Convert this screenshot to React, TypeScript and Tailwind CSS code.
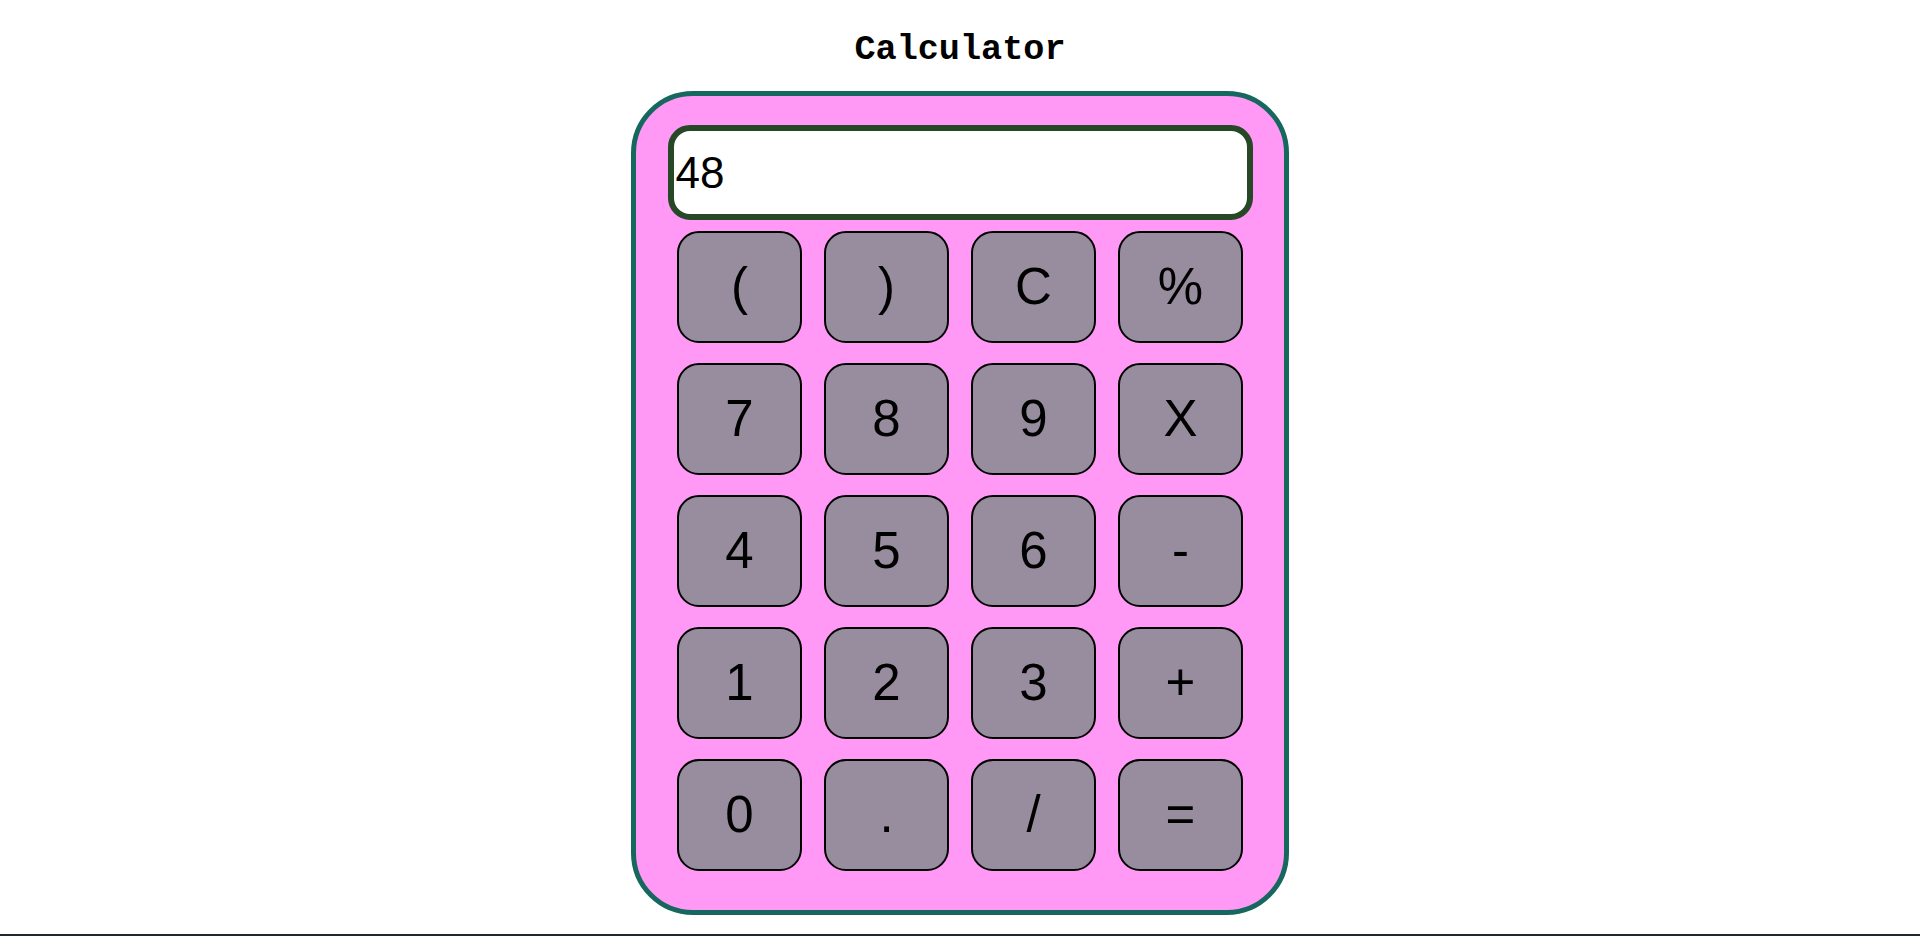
const keys: string[] = [
    "(", ")", "C", "%",
    "7", "8", "9", "X",
    "4", "5", "6", "-",
    "1", "2", "3", "+",
    "0", ".", "/", "=",
]

const App = () => {

    const buttons: JSX.Element[] = keys.map((key) => {
        return (
            <button key={key} type="button" className="w-[125px] h-[112px] flex items-center justify-center rounded-[22px] border-2 border-black bg-[#978d9e] text-[51px] text-black font-['Liberation_Sans',Arial,sans-serif]">
                {key}
            </button>
        )
    })

    return (
        <div className="h-screen w-full bg-white border-b-2 border-[#1e2830] flex flex-col items-center">
            <h1 className="pt-[30px] mb-[21px] text-[35.2px] leading-[40px] font-bold text-black font-['Liberation_Mono','Courier_New',monospace]">Calculator</h1>
            <div className="w-[658px] h-[824px] flex flex-col items-center border-[5px] border-[#16685e] rounded-[62px] bg-[#ff99f5] pt-[29px]">
                <input type="text" readOnly value="48" className="w-[585px] h-[95px] rounded-[22px] border-[6px] border-[#264826] bg-white px-[2px] py-px text-[44px] text-black outline-none font-['Liberation_Sans',Arial,sans-serif]" />
                <div className="mt-[11px] grid grid-cols-4 gap-x-[22px] gap-y-[20px]">
                    {buttons}
                </div>
            </div>
        </div>
    )
}

export default App
